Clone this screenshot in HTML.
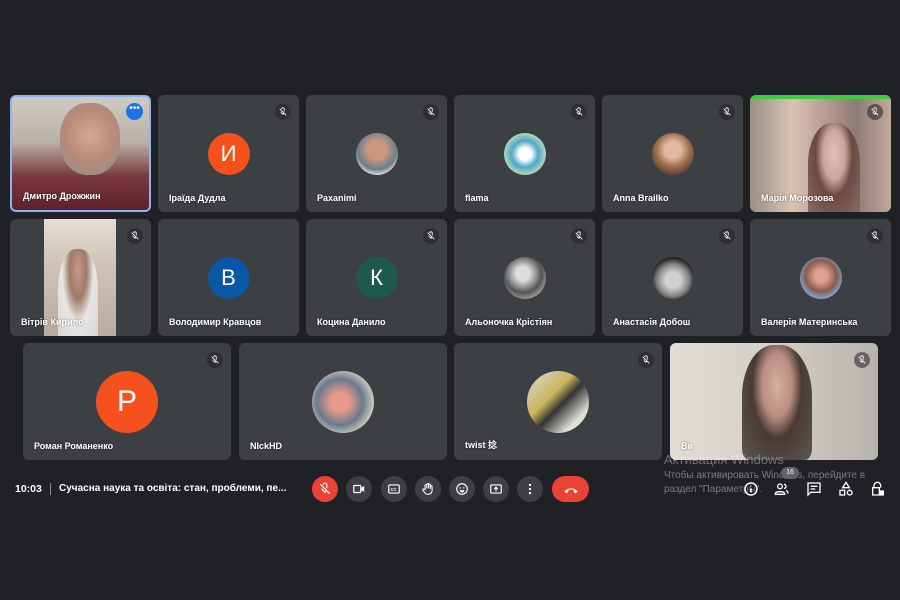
<!DOCTYPE html>
<html><head><meta charset="utf-8"><style>
*{margin:0;padding:0;box-sizing:border-box}
body{width:900px;height:600px;background:#202124;position:relative;overflow:hidden;font-family:"Liberation Sans","Noto Sans CJK SC",sans-serif;color:#fff}
.t{position:absolute;background:#3c4043;border-radius:6px;overflow:hidden}
.n{position:absolute;left:11px;bottom:9px;font-size:9px;font-weight:bold;white-space:nowrap;text-shadow:0 0 2px rgba(0,0,0,.5)}
.av{position:absolute;width:42px;height:42px;border-radius:50%;left:50%;top:50%;margin:-21px 0 0 -21px;display:flex;align-items:center;justify-content:center;font-size:22px}
.big{width:62px;height:62px;margin:-31px 0 0 -31px;font-size:30px}
.m{position:absolute;right:8px;top:9px;width:16px;height:16px;border-radius:50%;background:rgba(32,33,36,.55)}
.m svg{position:absolute;left:3px;top:3px}
.b{position:absolute;top:476px;width:26px;height:26px;border-radius:50%;background:#3c4043}
.b svg{position:absolute;left:6px;top:6px}
.ri{position:absolute;top:481px}
</style></head><body>
<svg width="0" height="0" style="position:absolute"><defs>
<symbol id="mu" viewBox="0 0 24 24"><path d="M9 5a3 3 0 0 1 6 0v6M7 11a5 5 0 0 0 8 4M17 11v0M12 16v3M4 4l16 16" stroke="#fff" stroke-width="2" fill="none"/></symbol>
</defs></svg>

<div class="t" style="left:10px;top:95px;width:141px;height:117px;background:linear-gradient(180deg,#cfcbc4 0%,#b9b1a5 40%,#7a3a3e 70%,#5c2228 100%);border:2px solid #8ab4f8">
 <div style="position:absolute;left:48px;top:6px;width:60px;height:72px;border-radius:45%;background:radial-gradient(circle at 50% 45%,#d9a792 0%,#b98a78 50%,#9c8e86 80%,transparent 82%)"></div>
 <div style="position:absolute;right:6px;top:6px;width:17px;height:17px;border-radius:50%;background:#1a73e8;font-size:10px;text-align:center;line-height:12px">•••</div>
 <div class="n">Дмитро Дрожжин</div></div>
<div class="t" style="left:158px;top:95px;width:141px;height:117px"><div class="m"><svg width="10" height="10"><use href="#mu"/></svg></div><div class="av" style="background:#f4511e">И</div><div class="n">Іраїда Дудла</div></div>
<div class="t" style="left:306px;top:95px;width:141px;height:117px"><div class="m"><svg width="10" height="10"><use href="#mu"/></svg></div><div class="av" style="background:radial-gradient(circle at 50% 40%,#c99680 30%,#6b7d8c 60%,#d7d2c8 75%)"></div><div class="n">Paxanimi</div></div>
<div class="t" style="left:454px;top:95px;width:141px;height:117px"><div class="m"><svg width="10" height="10"><use href="#mu"/></svg></div><div class="av" style="background:radial-gradient(circle at 50% 50%,#fff 20%,#4fa7c8 45%,#c2e0b8 75%)"></div><div class="n">flama</div></div>
<div class="t" style="left:602px;top:95px;width:141px;height:117px"><div class="m"><svg width="10" height="10"><use href="#mu"/></svg></div><div class="av" style="background:radial-gradient(circle at 50% 40%,#e2b9a0 25%,#a0714f 50%,#5a3a35 80%)"></div><div class="n">Anna Brailko</div></div>
<div class="t" style="left:750px;top:95px;width:141px;height:117px;background:linear-gradient(90deg,#9b8f86 0%,#d9c3b2 30%,#b59a8f 55%,#8f7a76 75%,#c0a89a 100%)">
 <div style="position:absolute;left:0;top:0;width:141px;height:4px;background:#3ccf3c"></div>
 <div style="position:absolute;left:58px;top:28px;width:52px;height:90px;border-radius:45% 45% 0 0;background:radial-gradient(ellipse at 50% 35%,#e1c2b7 0%,#c8a69a 30%,#6b4a42 50%,#8a6a62 100%)"></div>
 <div class="m"><svg width="10" height="10"><use href="#mu"/></svg></div><div class="n">Марія Морозова</div></div>

<div class="t" style="left:10px;top:219px;width:141px;height:117px"><div style="position:absolute;left:34px;top:0;width:72px;height:117px;background:linear-gradient(180deg,#e6dcd2 0%,#cfc3b6 40%,#b8aa9f 100%)"><div style="position:absolute;left:14px;top:30px;width:40px;height:87px;border-radius:45% 45% 0 0;background:radial-gradient(ellipse at 50% 25%,#c79c86 0%,#9e7a68 30%,#e8e6e4 55%,#d8d6d4 100%)"></div></div><div class="m"><svg width="10" height="10"><use href="#mu"/></svg></div><div class="n">Вітрів Кирило</div></div>
<div class="t" style="left:158px;top:219px;width:141px;height:117px"><div class="av" style="background:#0b57a6">В</div><div class="n">Володимир Кравцов</div></div>
<div class="t" style="left:306px;top:219px;width:141px;height:117px"><div class="m"><svg width="10" height="10"><use href="#mu"/></svg></div><div class="av" style="background:#1e5a4a">К</div><div class="n">Коцина Данило</div></div>
<div class="t" style="left:454px;top:219px;width:141px;height:117px"><div class="m"><svg width="10" height="10"><use href="#mu"/></svg></div><div class="av" style="background:radial-gradient(circle at 45% 40%,#ddd 20%,#555 55%,#aaa 80%)"></div><div class="n">Альоночка Крістіян</div></div>
<div class="t" style="left:602px;top:219px;width:141px;height:117px"><div class="m"><svg width="10" height="10"><use href="#mu"/></svg></div><div class="av" style="background:radial-gradient(circle at 50% 55%,#d0d0d0 25%,#888 50%,#111 75%)"></div><div class="n">Анастасія Добош</div></div>
<div class="t" style="left:750px;top:219px;width:141px;height:117px"><div class="m"><svg width="10" height="10"><use href="#mu"/></svg></div><div class="av" style="background:radial-gradient(circle at 50% 45%,#e0a090 20%,#8a5a50 50%,#7ab0d8 75%)"></div><div class="n">Валерія Материнська</div></div>

<div class="t" style="left:23px;top:343px;width:208px;height:117px"><div class="m"><svg width="10" height="10"><use href="#mu"/></svg></div><div class="av big" style="background:#f4511e">Р</div><div class="n">Роман Романенко</div></div>
<div class="t" style="left:239px;top:343px;width:208px;height:117px"><div class="av big" style="background:radial-gradient(circle at 45% 50%,#e79a8a 20%,#6a7a8a 50%,#d7cfc4 75%)"></div><div class="n">NIckHD</div></div>
<div class="t" style="left:454px;top:343px;width:208px;height:117px"><div class="m"><svg width="10" height="10"><use href="#mu"/></svg></div><div class="av big" style="background:linear-gradient(135deg,#ddd 0%,#c9b35a 40%,#333 55%,#e0e0d8 80%)"></div><div class="n">twist 捻</div></div>
<div class="t" style="left:670px;top:343px;width:208px;height:117px;background:linear-gradient(90deg,#e0ddd4 0%,#d3cfc7 50%,#b6b3ad 100%)">
 <div style="position:absolute;left:72px;top:2px;width:70px;height:115px;border-radius:45% 45% 10% 10%;background:radial-gradient(ellipse at 50% 35%,#d6b0a0 0%,#b88e80 30%,#4a3a35 50%,#5a5a50 100%)"></div>
 <div class="m"><svg width="10" height="10"><use href="#mu"/></svg></div><div class="n">Ви</div></div>

<div style="position:absolute;left:664px;top:452px;font-size:13px;color:rgba(255,255,255,.35)">Активация Windows</div>
<div style="position:absolute;left:664px;top:469px;font-size:10px;line-height:14px;color:rgba(255,255,255,.4)">Чтобы активировать Windows, перейдите в<br>раздел "Параметры".</div>

<div style="position:absolute;left:15px;top:483px;font-size:10.5px;font-weight:bold">10:03</div>
<div style="position:absolute;left:50px;top:483px;width:1px;height:12px;background:#888"></div>
<div style="position:absolute;left:59px;top:483px;font-size:10px;font-weight:bold">Сучасна наука та освіта: стан, проблеми, пе...</div>

<div class="b" style="left:312px;background:#ea4335"><svg width="14" height="14"><use href="#mu"/></svg></div>
<div class="b" style="left:346px"><svg width="14" height="14" viewBox="0 0 24 24"><rect x="3" y="6" width="12" height="12" rx="1" fill="none" stroke="#fff" stroke-width="2"/><path d="M15 10l6-3v10l-6-3z" fill="#fff"/></svg></div>
<div class="b" style="left:381px"><svg width="14" height="14" viewBox="0 0 24 24"><rect x="3" y="5" width="18" height="14" rx="2" fill="none" stroke="#fff" stroke-width="2"/><text x="6" y="15" font-size="7" fill="#fff" font-family="Liberation Sans" font-weight="bold">CC</text></svg></div>
<div class="b" style="left:415px"><svg width="14" height="14" viewBox="0 0 24 24"><path d="M7 13V6a1.5 1.5 0 0 1 3 0v5V4a1.5 1.5 0 0 1 3 0v7V5a1.5 1.5 0 0 1 3 0v7V8a1.5 1.5 0 0 1 3 0v7a7 7 0 0 1-12 4l-4-5a1.5 1.5 0 0 1 2-2z" fill="none" stroke="#fff" stroke-width="1.8"/></svg></div>
<div class="b" style="left:449px"><svg width="14" height="14" viewBox="0 0 24 24"><circle cx="12" cy="12" r="9" fill="none" stroke="#fff" stroke-width="2"/><circle cx="9" cy="10" r="1.3" fill="#fff"/><circle cx="15" cy="10" r="1.3" fill="#fff"/><path d="M8 14h8a4 4 0 0 1-8 0z" fill="#fff"/></svg></div>
<div class="b" style="left:483px"><svg width="14" height="14" viewBox="0 0 24 24"><rect x="3" y="5" width="18" height="14" rx="1" fill="none" stroke="#fff" stroke-width="2"/><path d="M12 16V9M9 12l3-3 3 3" stroke="#fff" stroke-width="2" fill="none"/></svg></div>
<div class="b" style="left:517px"><svg width="14" height="14" viewBox="0 0 24 24"><circle cx="12" cy="5" r="2" fill="#fff"/><circle cx="12" cy="12" r="2" fill="#fff"/><circle cx="12" cy="19" r="2" fill="#fff"/></svg></div>
<div style="position:absolute;left:552px;top:476px;width:37px;height:26px;border-radius:13px;background:#ea4335"><svg width="16" height="10" style="position:absolute;left:11px;top:9px" viewBox="0 0 24 12"><path d="M2 8c5-6 15-6 20 0l-3 3-3-2V6c-3-1-5-1-8 0v3l-3 2z" fill="#fff"/></svg></div>

<svg class="ri" style="left:743px" width="16" height="16" viewBox="0 0 24 24"><circle cx="12" cy="12" r="9" fill="none" stroke="#fff" stroke-width="2.2"/><path d="M12 11v6M12 7v1" stroke="#fff" stroke-width="2.4"/></svg>
<div style="position:absolute;left:781px;top:467px;width:18px;height:12px;border-radius:6px;background:#5f6368;font-size:7px;text-align:center;line-height:12px">16</div>
<svg class="ri" style="left:774px" width="16" height="16" viewBox="0 0 24 24"><circle cx="9" cy="8" r="3.5" fill="none" stroke="#fff" stroke-width="2"/><path d="M2 19c0-4 14-4 14 0v1H2z" fill="none" stroke="#fff" stroke-width="2"/><path d="M15 5a3 3 0 0 1 0 6M18 14c2 1 3 2 3 5" stroke="#fff" stroke-width="2" fill="none"/></svg>
<svg class="ri" style="left:806px" width="16" height="16" viewBox="0 0 24 24"><path d="M3 3h18v14H7l-4 4z" fill="none" stroke="#fff" stroke-width="2"/><path d="M7 8h10M7 12h7" stroke="#fff" stroke-width="2"/></svg>
<svg class="ri" style="left:838px" width="16" height="16" viewBox="0 0 24 24"><path d="M12 2l5 8H7z" fill="none" stroke="#fff" stroke-width="2"/><rect x="3" y="14" width="7" height="7" fill="none" stroke="#fff" stroke-width="2"/><circle cx="17.5" cy="17.5" r="3.5" fill="none" stroke="#fff" stroke-width="2"/></svg>
<svg class="ri" style="left:870px" width="16" height="16" viewBox="0 0 24 24"><path d="M6 10V7a5 5 0 0 1 10 0v3" fill="none" stroke="#fff" stroke-width="2"/><path d="M4 10h10v11H4z" fill="none" stroke="#fff" stroke-width="2"/><rect x="14" y="14" width="7" height="8" rx="1" fill="#fff"/></svg>
</body></html>
